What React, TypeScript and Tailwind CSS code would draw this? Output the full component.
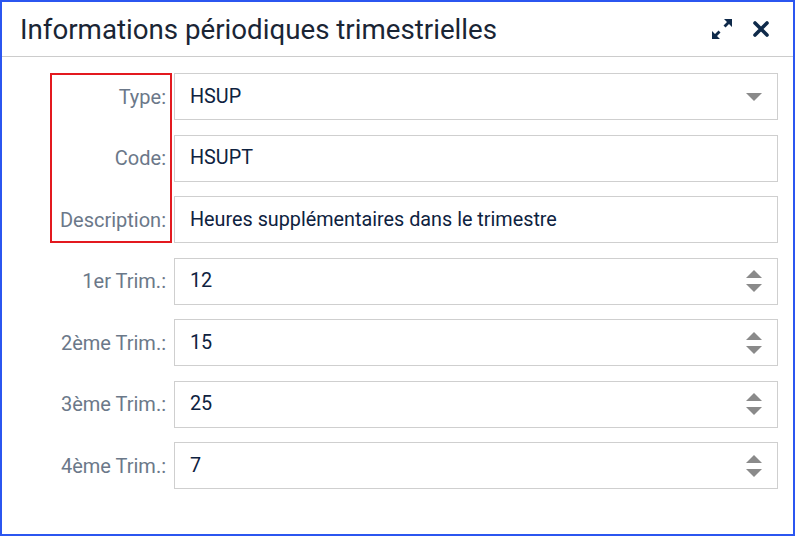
import type { ReactNode } from "react";

const rows = [
  { label: "1er Trim.:", value: "12" },
  { label: "2ème Trim.:", value: "15" },
  { label: "3ème Trim.:", value: "25" },
  { label: "4ème Trim.:", value: "7" },
];

function Row({ label, children }: { label: string; children: ReactNode }) {
  return (
    <div className="flex items-center gap-2">
      <div className="w-[164px] text-right text-[20px] text-[#6b7889]">{label}</div>
      <div className="flex-1 h-[47px] border border-[#cfcfcf] flex items-center pl-[15px] pr-[15px] text-[19.8px] text-[#0e2240]">
        {children}
      </div>
    </div>
  );
}

function Spinner() {
  return (
    <div className="ml-auto flex flex-col gap-[6px] items-center">
      <svg width="16" height="8" viewBox="0 0 16 8" aria-hidden="true">
        <path d="M0 8L8 0l8 8z" fill="#8a8a8a" />
      </svg>
      <svg width="16" height="8" viewBox="0 0 16 8" aria-hidden="true">
        <path d="M0 0h16L8 8z" fill="#8a8a8a" />
      </svg>
    </div>
  );
}

export default function App() {
  return (
    <div
      className="w-[795px] h-[536px] border-2 border-[#2b56f0] bg-white relative"
      style={{ fontFamily: "Roboto, 'Liberation Sans', sans-serif" }}
    >
      {/* Header */}
      <div className="h-[55px] flex items-center justify-between pl-[18px] pr-[24px] border-b border-[#cccccc]">
        <h1 className="text-[27.7px] text-[#1a2535] pt-[1px]">Informations périodiques trimestrielles</h1>
        <div className="flex items-center gap-[20px] text-[#0f2a4a]">
          <svg width="22" height="22" viewBox="0 0 22 22" fill="none" aria-hidden="true">
            <path d="M13 1h8v8l-3-3-3.5 3.5-2-2L16 4z" fill="currentColor" />
            <path d="M9 21H1v-8l3 3 3.5-3.5 2 2L6 18z" fill="currentColor" />
          </svg>
          <svg width="16" height="16" viewBox="0 0 16 16" aria-hidden="true">
            <path d="M2 2l12 12M14 2L2 14" stroke="currentColor" strokeWidth="3.6" strokeLinecap="round" />
          </svg>
        </div>
      </div>

      {/* Form */}
      <div className="pt-[16px] pr-[15px] flex flex-col gap-[14.5px]">
        <Row label="Type:">
          <span>HSUP</span>
          <svg className="ml-auto" width="16" height="8" viewBox="0 0 16 8" aria-hidden="true">
            <path d="M0 0h16L8 8z" fill="#8a8a8a" />
          </svg>
        </Row>
        <Row label="Code:">HSUPT</Row>
        <Row label="Description:">Heures supplémentaires dans le trimestre</Row>
        {rows.map((r) => (
          <Row key={r.label} label={r.label}>
            <span>{r.value}</span>
            <Spinner />
          </Row>
        ))}
      </div>

      {/* annotation highlight */}
      <div className="absolute left-[48px] top-[71px] w-[122px] h-[170px] border-2 border-[#e3191f]" />
    </div>
  );
}
